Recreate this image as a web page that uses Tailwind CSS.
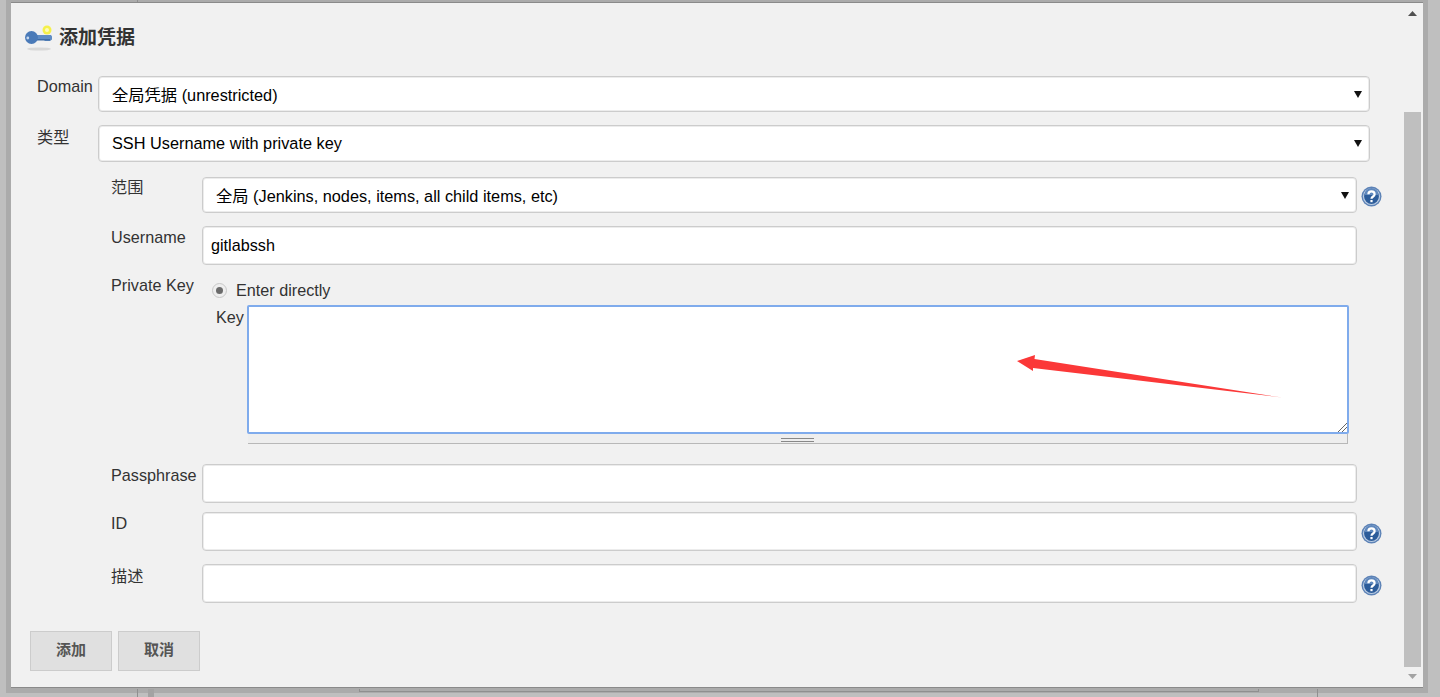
<!DOCTYPE html>
<html lang="en">
<head>
  <meta charset="UTF-8">
  <title>添加凭据</title>
  <script src="https://cdn.jsdelivr.net/npm/@tailwindcss/browser@4"></script>
</head>
<body class="relative h-[697px] w-[1440px] overflow-hidden bg-[#bfbfbf] font-['Liberation_Sans','Noto_Sans_CJK_SC',sans-serif] text-[16.2px] text-[#333]">

  <!-- dialog -->
  <div class="absolute left-[11px] top-[2px] flex h-[686px] w-[1412px] border-t border-b border-[#8a8a8a] bg-[#f1f1f1] shadow-[0_0_0_5px_#ababab]">
    <div class="w-[1393px] shrink-0 pl-[13px]">

      <div class="mt-[15px] flex h-[36px] items-center">
        <svg class="h-[36px] w-[32px]" viewBox="0 0 32 36">
          <ellipse cx="15" cy="31" rx="12" ry="1.6" fill="#d8d8d8"/>
          <circle cx="23" cy="12" r="4.5" fill="#f5f04a"/>
          <circle cx="23" cy="12" r="2" fill="#fdfbb8"/>
          <path d="M9 17H27L28 18.5V21.5L26 23H21L20 22H9z" fill="#5f8cc4"/>
          <rect x="10" y="21" width="16" height="1.5" fill="#3e6ca6"/>
          <circle cx="7.5" cy="19.5" r="6.5" fill="#4a7ab8"/>
          <circle cx="3.8" cy="20" r="1.4" fill="#c5d8ee"/>
        </svg>
        <h1 class="ml-[3px] mt-[5px] text-[19px] font-bold text-[#333]">添加凭据</h1>
      </div>

      <div class="mt-[22px] flex h-[37px] pl-[13px]">
        <label class="w-[61px] pt-[1px] leading-[18px]">Domain</label>
        <div class="flex h-[36px] w-[1272px] items-center justify-between rounded-[4px] border border-[#ccc] bg-white pl-[13px] pr-[7px] text-black shadow-[inset_0_0_0_1px_#ececec]">
          <span class="mt-[2px] text-[16.3px]">全局凭据 (unrestricted)</span>
          <svg class="h-[7px] w-[8px]" viewBox="0 0 8 7"><path d="M0 0H8L4 7z" fill="#111"/></svg>
        </div>
      </div>

      <div class="mt-[12px] flex h-[37px] pl-[13px]">
        <label class="w-[61px] pt-[3px] leading-[18px]">类型</label>
        <div class="flex h-[37px] w-[1272px] items-center justify-between rounded-[4px] border border-[#ccc] bg-white pl-[13px] pr-[7px] text-black shadow-[inset_0_0_0_1px_#ececec]">
          <span class="text-[16.3px]">SSH Username with private key</span>
          <svg class="h-[7px] w-[8px]" viewBox="0 0 8 7"><path d="M0 0H8L4 7z" fill="#111"/></svg>
        </div>
      </div>

      <div class="pl-[87px]">
        <div class="mt-[15px] flex h-[36px]">
          <label class="w-[91px] pt-[1px] leading-[18px]">范围</label>
          <div class="flex h-[36px] w-[1155px] items-center justify-between rounded-[4px] border border-[#ccc] bg-white pl-[13px] pr-[7px] text-black shadow-[inset_0_0_0_1px_#ececec]">
            <span class="mt-[2px] text-[16.3px]">全局 (Jenkins, nodes, items, all child items, etc)</span>
            <svg class="h-[7px] w-[8px]" viewBox="0 0 8 7"><path d="M0 0H8L4 7z" fill="#111"/></svg>
          </div>
          <svg class="ml-[4px] mt-[9px] h-[21px] w-[21px]" viewBox="0 0 21 21">
            <circle cx="10.5" cy="10.5" r="10" fill="#5c82b6"/>
            <circle cx="10.5" cy="10.5" r="8.6" fill="#bccde3"/>
            <circle cx="10.5" cy="10.5" r="7.4" fill="#2c5c9a"/>
            <path d="M3.5 9a7 7 0 0 1 14 0z" fill="#5f88bd"/>
            <path d="M7.4 8.2c0-3.8 6.2-3.8 6.2 0 0 2.3-3.1 2.3-3.1 4.6" fill="none" stroke="#fff" stroke-width="2.2"/>
            <rect x="9.4" y="14" width="2.2" height="2.2" fill="#fff"/>
          </svg>
        </div>

        <div class="mt-[13px] flex h-[39px]">
          <label class="w-[91px] pt-[2px] leading-[18px]">Username</label>
          <div class="flex h-[39px] w-[1155px] items-center rounded-[4px] border border-[#ccc] bg-white pl-[8px] text-black shadow-[inset_0_0_0_1px_#ececec]">gitlabssh</div>
        </div>

        <div class="mt-[11px] flex">
          <label class="w-[91px] leading-[18px]">Private Key</label>
          <div class="w-[1146px]">
            <div class="flex h-[29px] items-center pl-[10px]">
              <span class="flex h-[15px] w-[15px] items-center justify-center rounded-full border border-[#c8c8c8] bg-[#eee]">
                <span class="h-[7px] w-[7px] rounded-full bg-[#6b6b6b]"></span>
              </span>
              <span class="ml-[9px]">Enter directly</span>
            </div>
            <div class="flex">
              <label class="w-[46px] shrink-0 pl-[14px] pt-[3px] leading-[18px]">Key</label>
              <div class="-ml-px w-[1102px] shrink-0">
                <div class="relative h-[129px] rounded-[2px] border-2 border-[#7fabec] bg-white">
                  <svg class="absolute bottom-0 right-0 h-[10px] w-[10px]" viewBox="0 0 10 10">
                    <path d="M1 10 10 1M5 10l5-5" stroke="#666" fill="none"/>
                  </svg>
                </div>
                <div class="mx-px flex h-[10px] items-center justify-center border-b border-r border-[#b8b8b8] bg-[#eee] pt-[3px]">
                  <span class="h-[4px] w-[33px] border-y border-[#888]"></span>
                </div>
              </div>
            </div>
          </div>
        </div>

        <div class="mt-[20px] flex h-[39px]">
          <label class="w-[91px] pt-[2px] leading-[18px]">Passphrase</label>
          <div class="h-[39px] w-[1155px] rounded-[4px] border border-[#ccc] bg-white shadow-[inset_0_0_0_1px_#ececec]"></div>
        </div>

        <div class="mt-[9px] flex h-[39px]">
          <label class="w-[91px] pt-[2px] leading-[18px]">ID</label>
          <div class="h-[39px] w-[1155px] rounded-[4px] border border-[#ccc] bg-white shadow-[inset_0_0_0_1px_#ececec]"></div>
          <svg class="ml-[4px] mt-[11px] h-[21px] w-[21px]" viewBox="0 0 21 21">
            <circle cx="10.5" cy="10.5" r="10" fill="#5c82b6"/>
            <circle cx="10.5" cy="10.5" r="8.6" fill="#bccde3"/>
            <circle cx="10.5" cy="10.5" r="7.4" fill="#2c5c9a"/>
            <path d="M3.5 9a7 7 0 0 1 14 0z" fill="#5f88bd"/>
            <path d="M7.4 8.2c0-3.8 6.2-3.8 6.2 0 0 2.3-3.1 2.3-3.1 4.6" fill="none" stroke="#fff" stroke-width="2.2"/>
            <rect x="9.4" y="14" width="2.2" height="2.2" fill="#fff"/>
          </svg>
        </div>

        <div class="mt-[13px] flex h-[39px]">
          <label class="w-[91px] pt-[3px] leading-[18px]">描述</label>
          <div class="h-[39px] w-[1155px] rounded-[4px] border border-[#ccc] bg-white shadow-[inset_0_0_0_1px_#ececec]"></div>
          <svg class="ml-[4px] mt-[11px] h-[21px] w-[21px]" viewBox="0 0 21 21">
            <circle cx="10.5" cy="10.5" r="10" fill="#5c82b6"/>
            <circle cx="10.5" cy="10.5" r="8.6" fill="#bccde3"/>
            <circle cx="10.5" cy="10.5" r="7.4" fill="#2c5c9a"/>
            <path d="M3.5 9a7 7 0 0 1 14 0z" fill="#5f88bd"/>
            <path d="M7.4 8.2c0-3.8 6.2-3.8 6.2 0 0 2.3-3.1 2.3-3.1 4.6" fill="none" stroke="#fff" stroke-width="2.2"/>
            <rect x="9.4" y="14" width="2.2" height="2.2" fill="#fff"/>
          </svg>
        </div>
      </div>

      <div class="ml-[6px] mt-[28px] flex gap-[6px]">
        <button class="h-[40px] w-[82px] border border-[#ccc] bg-[#e0e0e0] pb-[2px] text-[15px] font-bold text-[#555]">添加</button>
        <button class="h-[40px] w-[82px] border border-[#ccc] bg-[#e0e0e0] pb-[2px] text-[15px] font-bold text-[#555]">取消</button>
      </div>
    </div>

    <!-- dialog scrollbar -->
    <div class="flex w-[19px] flex-col items-center pr-[2px]">
      <svg class="mt-[8px] h-[5px] w-[9px]" viewBox="0 0 9 5"><path d="M4.5 0 9 5H0z" fill="#505050"/></svg>
      <div class="mt-[96px] h-[555px] w-[17px] shrink-0 bg-[#bfbfbf]"></div>
      <svg class="mt-[7px] h-[5px] w-[9px]" viewBox="0 0 9 5"><path d="M0 0H9L4.500 5z" fill="#a3a3a3"/></svg>
    </div>
  </div>

  <!-- page behind the overlay -->
  <div class="absolute left-[137px] top-0 h-[2px] w-px bg-[#8f8f8f]"></div>
  <div class="absolute left-[137px] top-[689px] h-[8px] w-px bg-[#8f8f8f]"></div>
  <div class="absolute left-[148px] top-[689px] h-[8px] w-[6px] bg-[#a3a3a3]"></div>
  <div class="absolute left-[359px] top-[689px] h-[3px] w-[900px] border-x border-b border-[#8f8f8f]"></div>
  <div class="absolute left-[1317px] top-[689px] h-[8px] w-px bg-[#8f8f8f]"></div>

  <!-- screenshot arrow drawn over the key field -->
  <svg class="absolute left-[1010px] top-[350px] h-[55px] w-[280px]" viewBox="0 0 280 55">
    <path d="M7 11 25 5 24.500 9 272 47.500 23 18 23 21z" fill="#fb3838"/>
  </svg>
</body>
</html>
